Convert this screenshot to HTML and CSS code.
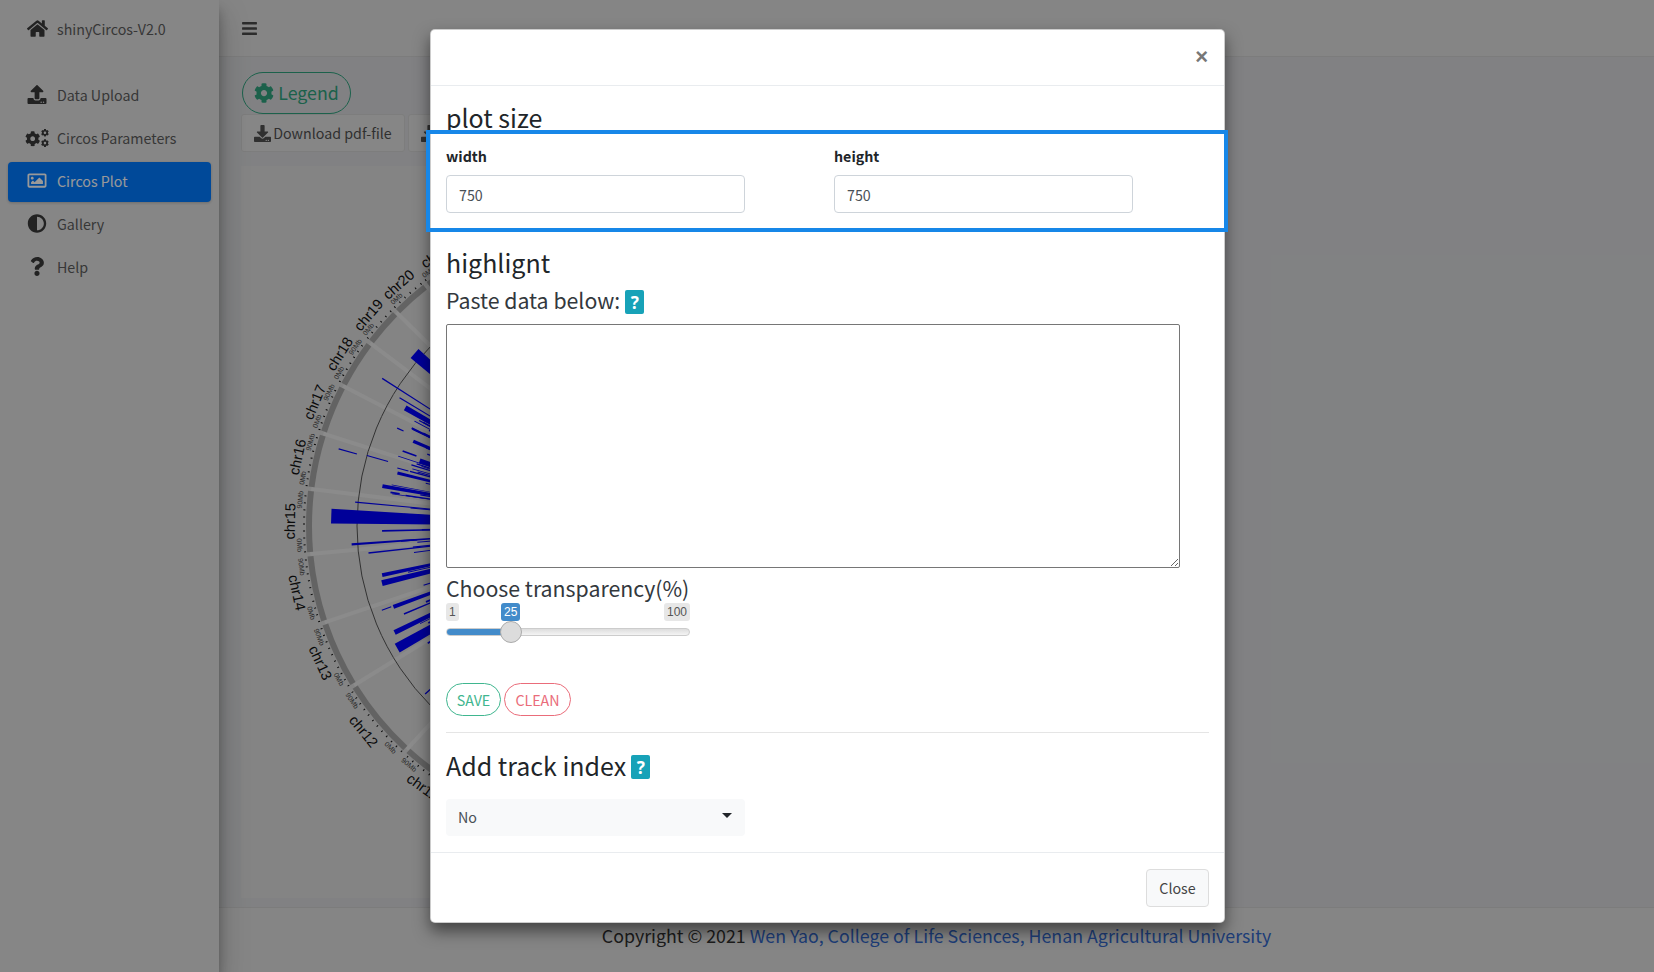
FILE: index.html
```html
<!DOCTYPE html>
<html lang="en">
<head>
<meta charset="utf-8">
<title>shinyCircos-V2.0</title>
<link rel="stylesheet" href="styles.css">
</head>
<body>
<svg class="defs" aria-hidden="true">
  <symbol id="i-cog" viewBox="0 0 512 512"><path d="M487.4 315.7l-42.6-24.6c4.3-23.2 4.3-47 0-70.2l42.6-24.6c4.9-2.8 7.1-8.6 5.5-14-11.1-35.6-30-67.8-54.7-94.6-3.8-4.1-10-5.1-14.8-2.3L380.8 110c-17.9-15.4-38.5-27.3-60.8-35.1V25.8c0-5.6-3.9-10.5-9.4-11.7-36.7-8.2-74.3-7.8-109.2 0-5.5 1.2-9.4 6.1-9.4 11.7V75c-22.2 7.9-42.8 19.8-60.8 35.1L88.7 85.5c-4.9-2.8-11-1.9-14.8 2.3-24.7 26.7-43.6 58.9-54.7 94.6-1.7 5.4.6 11.2 5.5 14L67.3 221c-4.3 23.2-4.3 47 0 70.2l-42.6 24.6c-4.9 2.8-7.1 8.6-5.5 14 11.1 35.6 30 67.8 54.7 94.6 3.8 4.1 10 5.1 14.8 2.3l42.6-24.6c17.9 15.4 38.5 27.3 60.8 35.1v49.2c0 5.6 3.9 10.5 9.4 11.7 36.7 8.2 74.3 7.8 109.2 0 5.5-1.2 9.4-6.1 9.4-11.7v-49.2c22.2-7.9 42.8-19.8 60.8-35.1l42.6 24.6c4.9 2.8 11 1.9 14.8-2.3 24.7-26.7 43.6-58.9 54.7-94.6 1.5-5.5-.7-11.3-5.6-14.1zM256 336c-44.1 0-80-35.9-80-80s35.9-80 80-80 80 35.9 80 80-35.9 80-80 80z"/></symbol>
  <symbol id="i-download" viewBox="0 0 512 512"><path d="M216 0h80c13.3 0 24 10.7 24 24v168h87.7c17.8 0 26.7 21.5 14.1 34.1L269.7 378.3c-7.5 7.5-19.8 7.5-27.3 0L90.1 226.1c-12.6-12.6-3.7-34.1 14.1-34.1H192V24c0-13.3 10.7-24 24-24zm296 376v112c0 13.3-10.7 24-24 24H24c-13.3 0-24-10.7-24-24V376c0-13.3 10.7-24 24-24h146.7l49 49c20.1 20.1 52.5 20.1 72.6 0l49-49H488c13.3 0 24 10.7 24 24zm-124 88c0-11-9-20-20-20s-20 9-20 20 9 20 20 20 20-9 20-20zm64 0c0-11-9-20-20-20s-20 9-20 20 9 20 20 20 20-9 20-20z"/></symbol>
</svg>

<div class="app">
  <aside class="sidebar">
    <div class="brand">
      <span class="nav-icon"><svg class="ic-home" viewBox="0 0 576 512"><path d="M280.37 148.26L96 300.11V464a16 16 0 0 0 16 16l112.06-.29a16 16 0 0 0 15.92-16V368a16 16 0 0 1 16-16h64a16 16 0 0 1 16 16v95.64a16 16 0 0 0 16 16.05L464 480a16 16 0 0 0 16-16V300L295.67 148.26a12.19 12.19 0 0 0-15.3 0zM571.6 251.47L488 182.56V44.05a12 12 0 0 0-12-12h-56a12 12 0 0 0-12 12v72.61L318.47 43a48 48 0 0 0-61 0L4.34 251.47a12 12 0 0 0-1.6 16.9l25.5 31A12 12 0 0 0 45.15 301l235.22-193.74a12.19 12.19 0 0 1 15.3 0L530.9 301a12 12 0 0 0 16.9-1.6l25.5-31a12 12 0 0 0-1.7-16.93z"/></svg></span>
      <span>shinyCircos-V2.0</span>
    </div>
    <nav class="nav">
      <a class="nav-link"><span class="nav-icon"><svg class="ic-18" viewBox="0 0 512 512"><path d="M296 384h-80c-13.3 0-24-10.7-24-24V192h-87.7c-17.8 0-26.7-21.5-14.1-34.1L242.3 5.7c7.5-7.5 19.8-7.5 27.3 0l152.2 152.2c12.6 12.6 3.7 34.1-14.1 34.1H320v168c0 13.3-10.7 24-24 24zm216-8v112c0 13.3-10.7 24-24 24H24c-13.3 0-24-10.7-24-24V376c0-13.3 10.7-24 24-24h136v8c0 30.9 25.1 56 56 56h80c30.9 0 56-25.1 56-56v-8h136c13.3 0 24 10.7 24 24zm-124 88c0-11-9-20-20-20s-20 9-20 20 9 20 20 20 20-9 20-20zm64 0c0-11-9-20-20-20s-20 9-20 20 9 20 20 20 20-9 20-20z"/></svg></span>Data Upload</a>
      <a class="nav-link"><span class="nav-icon"><svg class="ic-cogs" viewBox="0 0 640 512"><use href="#i-cog" x="0" y="70" width="410" height="410"/><use href="#i-cog" x="425" y="10" width="215" height="215"/><use href="#i-cog" x="425" y="285" width="215" height="215"/></svg></span>Circos Parameters</a>
      <a class="nav-link active"><span class="nav-icon"><svg class="ic-18" viewBox="0 0 512 512"><path d="M464 64H48C21.49 64 0 85.49 0 112v288c0 26.51 21.49 48 48 48h416c26.51 0 48-21.49 48-48V112c0-26.51-21.49-48-48-48zm-6 336H54a6 6 0 0 1-6-6V118a6 6 0 0 1 6-6h404a6 6 0 0 1 6 6v276a6 6 0 0 1-6 6zM128 152c-22.091 0-40 17.909-40 40s17.909 40 40 40 40-17.909 40-40-17.909-40-40-40zM96 352h320v-80l-87.515-87.515c-4.686-4.686-12.284-4.686-16.971 0L192 304l-39.515-39.515c-4.686-4.686-12.284-4.686-16.971 0L96 304v48z"/></svg></span>Circos Plot</a>
      <a class="nav-link"><span class="nav-icon"><svg class="ic-18" viewBox="0 0 512 512"><path d="M8 256c0 136.966 111.033 248 248 248s248-111.034 248-248S392.966 8 256 8 8 119.033 8 256zm248 184V72c101.705 0 184 82.311 184 184 0 101.705-82.311 184-184 184z"/></svg></span>Gallery</a>
      <a class="nav-link"><span class="nav-icon"><svg class="ic-18" viewBox="0 0 384 512"><path d="M202.021 0C122.202 0 70.503 32.703 29.914 91.026c-7.363 10.58-5.093 25.086 5.178 32.874l43.138 32.709c10.373 7.865 25.132 6.026 33.253-4.148 25.049-31.381 43.63-49.449 82.757-49.449 30.764 0 68.816 19.799 68.816 49.631 0 22.552-18.617 34.134-48.993 51.164-35.423 19.86-82.299 44.576-82.299 106.405V320c0 13.255 10.745 24 24 24h72.471c13.255 0 24-10.745 24-24v-5.773c0-42.86 125.268-44.645 125.268-160.627C377.504 66.256 286.902 0 202.021 0zM192 373.459c-38.196 0-69.271 31.075-69.271 69.271 0 38.195 31.075 69.27 69.271 69.27s69.271-31.075 69.271-69.271-31.075-69.27-69.271-69.27z"/></svg></span>Help</a>
    </nav>
  </aside>

  <div class="main">
    <header class="topbar">
      <svg class="ic-bars" viewBox="0 0 448 512"><path d="M16 132h416c8.837 0 16-7.163 16-16V76c0-8.837-7.163-16-16-16H16C7.163 60 0 67.163 0 76v40c0 8.837 7.163 16 16 16zm0 160h416c8.837 0 16-7.163 16-16v-40c0-8.837-7.163-16-16-16H16c-8.837 0-16 7.163-16 16v40c0 8.837 7.163 16 16 16zm0 160h416c8.837 0 16-7.163 16-16v-40c0-8.837-7.163-16-16-16H16c-8.837 0-16 7.163-16 16v40c0 8.837 7.163 16 16 16z"/></svg>
    </header>
    <section class="content">
      <button class="btn-legend"><svg class="ic-legend" viewBox="0 0 512 512"><use href="#i-cog"/></svg>Legend</button>
      <div class="dl-row">
        <button class="btn-dl"><svg class="ic-dl" viewBox="0 0 512 512"><use href="#i-download"/></svg>Download pdf-file</button>
        <button class="btn-dl"><svg class="ic-dl" viewBox="0 0 512 512"><use href="#i-download"/></svg>Download svg-file</button>
      </div>
      <div class="plot-card" id="plot"></div>
    </section>
    <footer class="page-footer">
      <span>Copyright © 2021 <a class="footer-link">Wen Yao, College of Life Sciences, Henan Agricultural University</a></span>
    </footer>
  </div>
</div>

<div class="backdrop"></div>

<div class="modal">
  <div class="modal-header"><span class="close">×</span></div>
  <div class="modal-body">
    <h3 class="title first">plot size</h3>
    <div class="size-row">
      <div>
        <label class="field-label">width</label>
        <input class="text-input" type="text" value="750">
      </div>
      <div>
        <label class="field-label">height</label>
        <input class="text-input" type="text" value="750">
      </div>
    </div>
    <h3 class="title highlight">highlignt</h3>
    <div class="sub-title paste">Paste data below: <span class="help">?</span></div>
    <textarea class="paste-area"></textarea>
    <div class="sub-title transparency">Choose transparency(%)</div>
    <div class="slider">
      <div class="slider-labels"><span class="tag">1</span><span class="tag">100</span></div>
      <span class="tag tag-from">25</span>
      <div class="track"><div class="track-fill"></div></div>
      <span class="handle"></span>
    </div>
    <div class="actions">
      <button class="pill pill-save">SAVE</button>
      <button class="pill pill-clean">CLEAN</button>
    </div>
    <hr class="rule">
    <h3 class="title track-index">Add track index <span class="help">?</span></h3>
    <div class="select"><span>No</span><span class="caret"></span></div>
  </div>
  <div class="modal-footer"><button class="btn-close">Close</button></div>
  <div class="focus-box"></div>
</div>

<script src="plot.js"></script>
</body>
</html>
```

FILE: styles.css
```css
* { box-sizing: border-box; }
html, body { margin: 0; height: 100%; }
body {
  position: relative;
  width: 1654px;
  height: 972px;
  overflow: hidden;
  font-family: "Noto Sans CJK SC", "Noto Sans", sans-serif;
  font-size: 14.25px;
  color: #212529;
  background: #d7d8da;
}
.defs { position: absolute; width: 0; height: 0; }
svg { fill: currentColor; display: block; }

.app { display: flex; height: 972px; }

/* sidebar */
.sidebar {
  position: relative;
  z-index: 2;
  width: 219px;
  flex: none;
  background: #e0e0e0;
  color: #5c5c5c;
  box-shadow: 0 14px 28px rgba(0,0,0,.25), 0 10px 10px rgba(0,0,0,.22);
}
.brand {
  height: 56px;
  padding-left: 25px;
  display: flex;
  align-items: center;
  gap: 8px;
}
.nav { margin-top: 20px; padding: 0 8px; display: flex; flex-direction: column; gap: 3px; }
.nav-link {
  height: 40px;
  padding: 0 0 3px 17px;
  display: flex;
  align-items: center;
  gap: 8px;
  border-radius: 4px;
}
.nav-link.active { background: #007bff; color: #fff; box-shadow: 0 1px 3px rgba(0,0,0,.2); }
.nav-icon { width: 24px; display: flex; justify-content: center; color: #3a3a3a; }
.nav-link.active .nav-icon { color: #fff; }
.ic-home { width: 21px; height: 19px; }
.ic-18 { height: 19px; width: 20px; }
.ic-cogs { width: 24px; height: 20px; }

/* main column */
.main { flex: 1; min-width: 0; display: flex; flex-direction: column; }
.topbar {
  height: 57px;
  flex: none;
  padding-left: 23px;
  display: flex;
  align-items: center;
  background: #dedede;
  border-bottom: 1px solid #cfcfcf;
  color: #4a4a4a;
}
.ic-bars { width: 15px; height: 17px; }
.content { flex: 1; min-height: 0; padding: 15px 23px 0; }
.btn-legend {
  width: 109px;
  height: 42px;
  padding: 0;
  display: flex;
  align-items: center;
  justify-content: center;
  gap: 4px;
  border: 1px solid #2fa27e;
  border-radius: 21px;
  background: transparent;
  color: #2fa27e;
  font: 400 17.8px/1 "Noto Sans CJK SC", sans-serif;
}
.ic-legend { width: 20px; height: 20px; }
.dl-row { display: flex; gap: 3px; margin-left: -1px; }
.btn-dl {
  height: 38px;
  width: 164px;
  flex: none;
  padding: 0;
  display: flex;
  align-items: center;
  justify-content: center;
  gap: 2px;
  border: 1px solid #d0d0d0;
  border-radius: 3px;
  background: #e0e0e0;
  color: #505050;
  font: 400 14.25px/1 "Noto Sans CJK SC", sans-serif;
}
.ic-dl { width: 17px; height: 17px; }
.plot-card { width: 800px; height: 732px; margin-top: 14px; margin-left: -1px; background: #dcdcdc; }
.plot-card svg { width: 800px; height: 732px; }
.page-footer {
  height: 65px;
  flex: none;
  padding-bottom: 10px;
  display: flex;
  align-items: center;
  justify-content: center;
  background: #dedede;
  border-top: 1px solid #cfcfcf;
  font-size: 17.8px;
  color: #303030;
}
.footer-link { color: #3267c8; }

/* overlay */
.backdrop { position: absolute; inset: 0; z-index: 5; background: rgba(0,0,0,.4); }

/* modal */
.modal {
  position: absolute;
  z-index: 6;
  left: 430px;
  top: 29px;
  width: 795px;
  height: 894px;
  display: flex;
  flex-direction: column;
  background: #fff;
  border: 1px solid rgba(0,0,0,.2);
  border-radius: 5px;
  box-shadow: 0 8px 16px rgba(0,0,0,.5);
}
.modal-header {
  height: 56px;
  flex: none;
  padding: 0 16px 1px 0;
  display: flex;
  justify-content: flex-end;
  align-items: center;
  border-bottom: 1px solid #e9ecef;
}
.close { font: 700 22px/1 "Liberation Sans", sans-serif; color: #777; }
.modal-body { flex: 1; min-height: 0; padding: 14px 15px 0; }
.title { margin: 0; font-size: 25px; line-height: 34px; font-weight: 400; color: #212529; }
.size-row { display: grid; grid-template-columns: 388px 388px; margin-top: 12px; }
.field-label { display: block; height: 20px; margin-bottom: 9px; font-size: 14.25px; line-height: 20px; font-weight: 700; }
.text-input {
  display: block;
  width: 299px;
  height: 38px;
  padding: 0 12px;
  border: 1px solid #ced4da;
  border-radius: 4px;
  font: 400 14.25px/1 "Noto Sans CJK SC", sans-serif;
  color: #495057;
}
.highlight { margin-top: 32px; }
.sub-title { font-size: 21.3px; line-height: 30px; color: #33383d; }
.paste { margin-top: 6px; display: flex; align-items: center; gap: 5px; }
.help {
  display: inline-flex;
  align-items: center;
  justify-content: center;
  width: 19px;
  height: 24px;
  border-radius: 2px;
  background: #17a2b8;
  color: #fff;
  font: 700 17px/1 "Noto Sans", sans-serif;
}
.paste .help { position: relative; top: 2px; }
.paste-area {
  display: block;
  width: 734px;
  height: 244px;
  margin-top: 9px;
  border: 1px solid #767676;
  border-radius: 2px;
}
.transparency { margin-top: 5px; }

/* slider */
.slider { position: relative; width: 244px; height: 40px; }
.slider-labels { display: flex; justify-content: space-between; }
.tag {
  height: 18px;
  padding: 0 3px;
  border-radius: 3px;
  background: #e7e7e7;
  color: #555;
  font: 400 12px/18px "Liberation Sans", sans-serif;
}
.tag-from { position: absolute; left: 55px; top: 0; padding: 0 3px; background: #428bca; color: #fff; }
.track {
  position: absolute;
  left: 0;
  right: 0;
  top: 25px;
  height: 8px;
  border: 1px solid #ccc;
  border-radius: 4px;
  background: linear-gradient(#ddd, #f4f4f4);
  overflow: hidden;
}
.track-fill { width: 65px; margin: -1px 0 0 -1px; height: 8px; background: #428bca; }
.handle {
  position: absolute;
  left: 54px;
  top: 18px;
  width: 22px;
  height: 22px;
  border: 1px solid #ababab;
  border-radius: 50%;
  background: #dcdcdc;
}
.actions { display: flex; gap: 3px; margin-top: 40px; }
.pill {
  height: 33px;
  padding: 2px 0 0;
  background: #fff;
  border-radius: 17px;
  font: 400 14.25px/1 "Noto Sans CJK SC", sans-serif;
}
.pill-save { width: 55px; border: 1px solid #3fb68f; color: #3fb68f; }
.pill-clean { width: 67px; border: 1px solid #ea6c7a; color: #ea6c7a; }
.rule { height: 1px; margin: 16px 0 0; border: 0; background: #e5e5e5; }
.track-index { margin-top: 15px; display: flex; align-items: center; gap: 5px; }
.track-index .help { position: relative; top: 2px; }
.select {
  width: 299px;
  height: 37px;
  margin-top: 17px;
  padding: 0 12px 2px;
  display: flex;
  align-items: center;
  justify-content: space-between;
  background: #f8f9fa;
  border-radius: 4px;
  color: #495057;
}
.caret {
  margin: -3px 1px 0 0;
  border-top: 5px solid #212529;
  border-left: 5px solid transparent;
  border-right: 5px solid transparent;
}
.modal-footer {
  height: 70px;
  flex: none;
  padding: 16px 15px 0 0;
  display: flex;
  justify-content: flex-end;
  border-top: 1px solid #e9ecef;
}
.btn-close {
  width: 63px;
  height: 38px;
  padding: 0;
  background: #f8f9fa;
  border: 1px solid #ddd;
  border-radius: 4px;
  color: #444;
  font: 400 14.25px/1 "Noto Sans CJK SC", sans-serif;
}
.focus-box {
  position: absolute;
  left: -5px;
  right: -4px;
  top: 100px;
  height: 102px;
  border: 4px solid #1787e8;
  pointer-events: none;
}

/* circos plot */
.c-ring { fill: none; stroke: #a6a6a6; stroke-width: 6; }
.c-tick { fill: none; stroke: #111; stroke-width: 2; stroke-dasharray: 1 6; }
.c-spoke { stroke: #e8e8e8; stroke-width: 4; }
.c-circle { fill: none; stroke: #555; stroke-width: 1; }
.c-bar { fill: #0000ff; }
.c-label { font: 14.5px "Liberation Sans", sans-serif; fill: #111; text-anchor: middle; dominant-baseline: central; }
.c-mb { font: 7px "Liberation Sans", sans-serif; fill: #444; text-anchor: middle; dominant-baseline: central; }
```

FILE: plot.js
```js
(function () {
  var NS = 'http://www.w3.org/2000/svg';
  var cx = 372, cy = 360;
  var host = document.getElementById('plot');
  var svg = document.createElementNS(NS, 'svg');
  svg.setAttribute('viewBox', '0 0 800 732');

  function el(name, attrs, text) {
    var e = document.createElementNS(NS, name);
    for (var k in attrs) e.setAttribute(k, attrs[k]);
    if (text) e.textContent = text;
    svg.appendChild(e);
    return e;
  }
  // theta: degrees from the left horizontal, positive upward
  function pt(r, t) {
    var a = t * Math.PI / 180;
    return [cx - r * Math.cos(a), cy - r * Math.sin(a)];
  }
  function arc(r, a, b) {
    var p = pt(r, a), q = pt(r, b);
    return 'M' + p[0] + ' ' + p[1] + 'A' + r + ' ' + r + ' 0 0 1 ' + q[0] + ' ' + q[1];
  }
  function label(cls, r, t, text) {
    var p = pt(r, t);
    var rot = t >= 0 ? t - 90 : 90 + t;
    el('text', { 'class': cls, x: p[0], y: p[1], transform: 'rotate(' + rot + ' ' + p[0] + ' ' + p[1] + ')' }, text);
  }

  var gaps = [-60.5, -47.3, -31.6, -18.5, -5.3, 7, 17.7, 27.4, 37, 44.6, 52.2, 62];
  var names = ['chr11', 'chr12', 'chr13', 'chr14', 'chr15', 'chr16', 'chr17', 'chr18', 'chr19', 'chr20', 'chr21'];

  gaps.forEach(function (g) {
    var a = pt(304, g), b = pt(90, g);
    el('line', { 'class': 'c-spoke', x1: a[0], y1: a[1], x2: b[0], y2: b[1] });
  });
  el('circle', { 'class': 'c-circle', cx: cx, cy: cy, r: 256 });

  names.forEach(function (n, i) {
    var a = gaps[i] + 0.4, b = gaps[i + 1] - 0.4;
    el('path', { 'class': 'c-ring', d: arc(304, a, b) });
    el('path', { 'class': 'c-tick', d: arc(309, a, b) });
    var mid = (a + b) / 2;
    label('c-label', 323, mid, n);
    var upper = mid >= 0;
    label('c-mb', 314, upper ? a + 1.4 : a + 2, '0Mb');
    if (b - a > 7) label('c-mb', 314, b - 1.8, '90Mb');
  });

  // [theta, outer radius, inner radius, thickness in degrees]
  var bars = [
    [41, 263, 200, 2.6], [32.6, 274, 150, .25], [29.6, 239, 150, 1.3], [31, 249, 190, .3],
    [24.4, 237, 230, .3], [23, 217, 150, .9], [18.6, 204, 150, 1.4], [15.7, 285, 266, .25],
    [16, 256, 234, .25], [13.8, 222, 150, .8], [9.8, 234, 150, .9], [5.3, 259, 150, .3],
    [2, 282, 150, 3], [-4, 262, 150, .5], [-1.2, 231, 150, .4], [-6.3, 246, 150, .4],
    [-13.9, 238, 150, 1.4], [-12, 236, 150, .9], [-20, 246, 236, .25], [-20.2, 234, 150, 1],
    [-26, 243, 150, 1.2], [-29.5, 248, 150, 2.3], [-41.8, 252, 190, .3]
  ];
  var seed = 7;
  function rnd() { seed = (seed * 16807) % 2147483647; return seed / 2147483647; }
  for (var i = 0; i < 46; i++) {
    var t = -36 + rnd() * 70;
    var o = 190 + rnd() * 38;
    bars.push([t, o, o - 8 - rnd() * 60, .15 + rnd() * .35]);
  }
  bars.forEach(function (b) {
    var h = b[3] / 2;
    var p = [pt(b[1], b[0] - h), pt(b[1], b[0] + h), pt(b[2], b[0] + h), pt(b[2], b[0] - h)];
    el('polygon', { 'class': 'c-bar', points: p.map(function (q) { return q.join(','); }).join(' ') });
  });

  host.appendChild(svg);
})();
```
